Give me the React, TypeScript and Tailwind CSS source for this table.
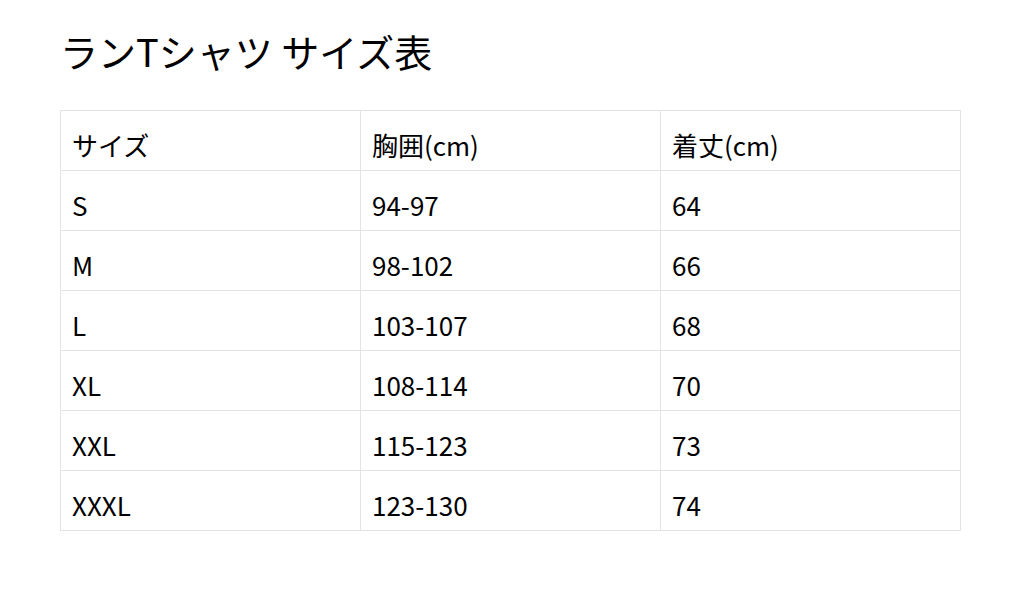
import React from 'react';

const rows = [
  ['S', '94-97', '64'],
  ['M', '98-102', '66'],
  ['L', '103-107', '68'],
  ['XL', '108-114', '70'],
  ['XXL', '115-123', '73'],
  ['XXXL', '123-130', '74'],
];

const App: React.FC = () => {
  return (
    <div
      className="w-[1020px] h-[590px] bg-white text-black px-[60px] pt-[22px]"
      style={{ fontFamily: '"Noto Sans CJK JP", "Noto Sans", sans-serif' }}
    >
      <h1 className="text-[38px] leading-[58px] mb-[30px]">ランTシャツ サイズ表</h1>
      <table className="w-[901px] border-collapse table-fixed text-[26px]">
        <tbody>
          <tr>
            <td className="border border-[#e3e3e3] h-[60px] px-[11px] pt-[8px] align-middle">サイズ</td>
            <td className="border border-[#e3e3e3] h-[60px] px-[11px] pt-[8px] align-middle">胸囲(cm)</td>
            <td className="border border-[#e3e3e3] h-[60px] px-[11px] pt-[8px] align-middle">着丈(cm)</td>
          </tr>
          {rows.map((r) => (
            <tr key={r[0]}>
              {r.map((c, i) => (
                <td key={i} className="border border-[#e3e3e3] h-[60px] px-[11px] pt-[8px] align-middle">
                  {c}
                </td>
              ))}
            </tr>
          ))}
        </tbody>
      </table>
    </div>
  );
};

export default App;
